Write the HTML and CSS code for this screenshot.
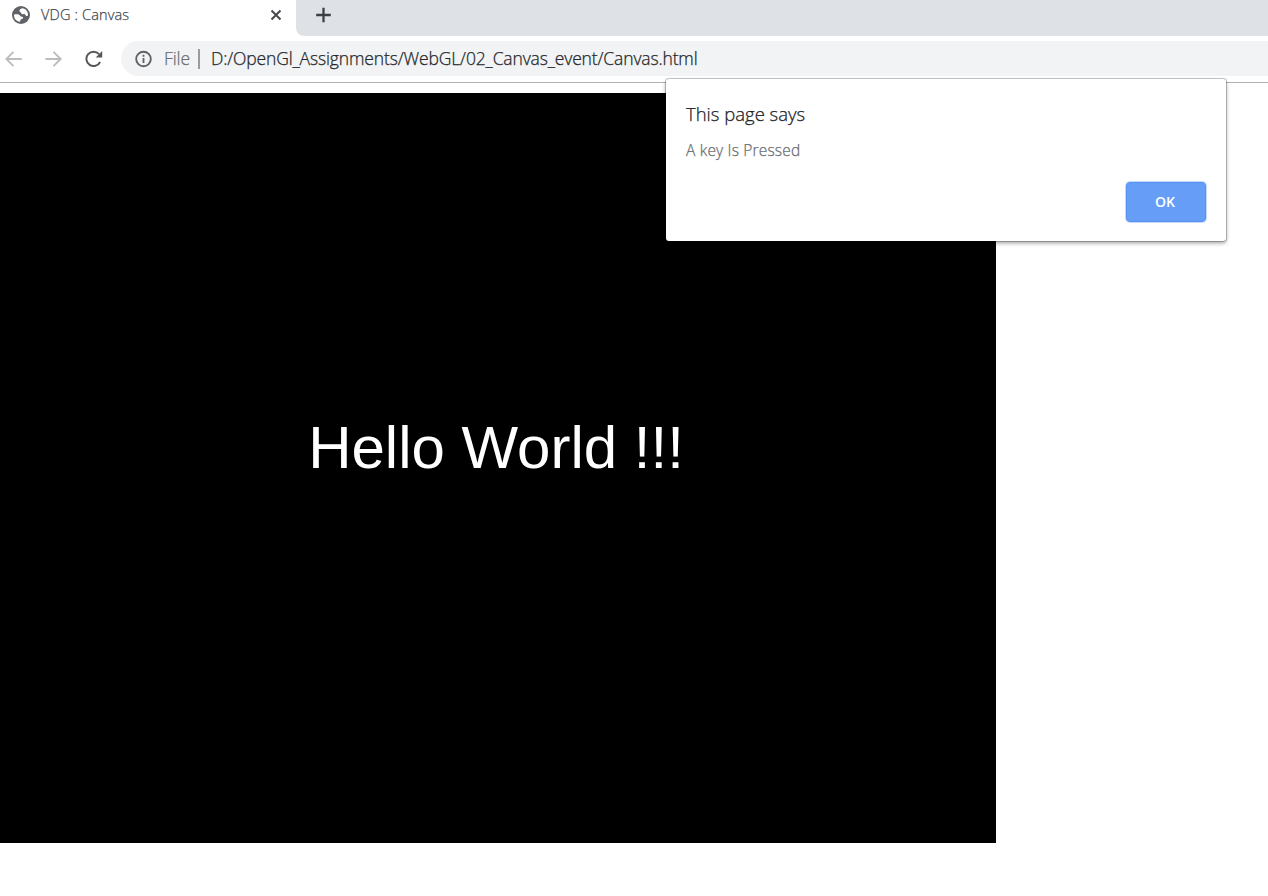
FILE: index.html
```html
<!DOCTYPE html>
<html lang="en">
<head>
<meta charset="utf-8">
<title>VDG : Canvas</title>
<link rel="stylesheet" href="styles.css">
</head>
<body>
<div class="browser">
  <header class="tabstrip">
    <div class="tab">
      <svg class="globe" width="18" height="18" viewBox="0 0 18 18"><circle cx="9" cy="9" r="9" fill="#5f6368"/><path d="M10.800 2.200C8.800 2.400 7.200 3.700 7.400 5c.2 1.100 1.500.9 1.700 1.900.2 1.100 1 1.600 2 1.300 1.200-.3 1.900.3 2.700 1.200.6.700 1.500.6 2.200.2C16.300 6 14.300 3 10.800 2.200zM2 8.500c1.700-.3 3.600-.4 5.100.2 1.100.4.9 1.500 2 1.800 1.200.3 2.300.5 2 1.600-.3 1-2 .9-2.500 1.700-.3.600-.2 1.200-.6 1.900C4.300 15.500 1.700 12.400 2 8.500z" fill="#fff"/></svg>
      <span class="tab-title">VDG : Canvas</span>
      <svg class="close" width="12" height="12" viewBox="0 0 12 12"><path d="M1.500 1.500l9 9M10.500 1.500l-9 9" stroke="#45494d" stroke-width="2"/></svg>
    </div>
    <div class="strip-rest">
      <svg width="16" height="16" viewBox="0 0 16 16"><path d="M8.500 .7v14.600M1.200 8h14.600" stroke="#3c4043" stroke-width="2.300"/></svg>
    </div>
  </header>
  <nav class="toolbar">
    <svg class="nav-icon" width="18" height="18" viewBox="0 0 18 18"><path d="M16.700 9H2M8.500 1.800L1.300 9l7.200 7.200" fill="none" stroke="#babcbe" stroke-width="1.900"/></svg>
    <svg class="nav-icon" width="18" height="18" viewBox="0 0 18 18"><path d="M.500 9h15M8.500 1.800L15.700 9l-7.200 7.200" fill="none" stroke="#babcbe" stroke-width="1.900"/></svg>
    <svg class="nav-icon" width="18" height="18" viewBox="0 0 18 18"><path d="M15.100 12A7.200 7.200 0 1 1 14 4.100" fill="none" stroke="#54585d" stroke-width="2"/><path d="M17.200.9v6.500h-6.500z" fill="#54585d"/></svg>
    <div class="omnibox">
      <svg class="info" width="18" height="18" viewBox="0 0 18 18"><circle cx="8.500" cy="9" r="7.300" fill="none" stroke="#5f6368" stroke-width="1.900"/><path d="M8.500 8v5M8.500 4.800v2" stroke="#5f6368" stroke-width="1.800"/></svg>
      <span class="scheme">File</span>
      <span class="divider"></span>
      <span class="url">D:/OpenGl_Assignments/WebGL/02_Canvas_event/Canvas.html</span>
    </div>
  </nav>
  <main class="page">
    <div class="canvas"><span class="hello">Hello World !!!</span></div>
  </main>
  <section class="dialog">
    <h1 class="dialog-title">This page says</h1>
    <p class="dialog-text">A key Is Pressed</p>
    <button class="ok">OK</button>
  </section>
</div>
</body>
</html>
```
FILE: styles.css
```css
* { box-sizing: border-box; }
body { margin: 0; background: #fff; overflow: hidden; }
.browser {
  position: relative;
  display: flex;
  flex-direction: column;
  width: 1268px;
  height: 896px;
  font-family: "Open Sans", "Noto Sans", sans-serif;
  font-weight: 300;
}
.tab-title, .scheme, .url, .dialog-title, .dialog-text { -webkit-text-stroke: 0.25px currentColor; }
.tabstrip { display: flex; height: 36px; flex: none; background: #fff; }
.tab { display: flex; align-items: center; width: 296px; height: 30px; padding: 0 14px 0 12px; }
.tab-title { margin-left: 11px; padding-bottom: 2px; font-size: 14.5px; letter-spacing: 0.15px; color: #45494d; white-space: nowrap; }
.close { margin-left: auto; }
.strip-rest { flex: 1; padding: 7px 0 0 19px; background: #dee1e6; border-bottom-left-radius: 8px; }
.strip-rest svg { display: block; }
.toolbar {
  display: flex;
  align-items: center;
  gap: 22px;
  height: 47px;
  flex: none;
  padding: 0 0 1px 5px;
  border-bottom: 1px solid #b0b1b2;
}
.nav-icon { flex: none; }
.nav-icon:nth-child(3) { margin-right: -4px; }
.omnibox {
  display: flex;
  align-items: center;
  flex: 1;
  height: 35px;
  padding-left: 14px;
  border-radius: 18px 0 0 18px;
  background: #f1f3f4;
  font-size: 17.5px;
  white-space: nowrap;
}
.scheme { margin-left: 11px; width: 26px; padding-bottom: 2px; color: #6b6f74; letter-spacing: -0.1px; }
.divider { width: 2px; height: 20px; margin: 0 11px 0 8px; background: #9b9b9b; }
.url { padding-bottom: 2px; color: #24262a; letter-spacing: -0.14px; }
.page { flex: 1; padding-top: 10px; }
.canvas { display: flex; justify-content: center; width: 996px; height: 750px; padding: 321px 4px 0 0; background: #000; }
.hello { font: 400 60px/68px "Liberation Sans", Arial, sans-serif; color: #fff; white-space: nowrap; }
.dialog {
  position: absolute;
  left: 666px;
  top: 79px;
  display: flex;
  flex-direction: column;
  width: 560px;
  height: 162px;
  padding: 22px 20px 19px;
  border-radius: 3px;
  background: #fff;
  box-shadow: 0 0 0 1px rgba(0, 0, 0, 0.2), 0 2px 4px rgba(0, 0, 0, 0.4);
}
.dialog-title { margin: 0; font-size: 18.5px; font-weight: 300; line-height: 26px; color: #202124; }
.dialog-text { margin: 12px 0 0; font-size: 15.5px; line-height: 22px; letter-spacing: 0.18px; color: #6a6d72; }
.ok {
  align-self: flex-end;
  width: 80px;
  height: 40px;
  margin-top: auto;
  padding: 0 2px 2px 0;
  border: 1px solid #5792f5;
  border-radius: 4px;
  background: #669df6;
  box-shadow: 0 0 0 1px #c6dafc;
  color: #fff;
  font: 600 14px "Open Sans", sans-serif;
}
```
